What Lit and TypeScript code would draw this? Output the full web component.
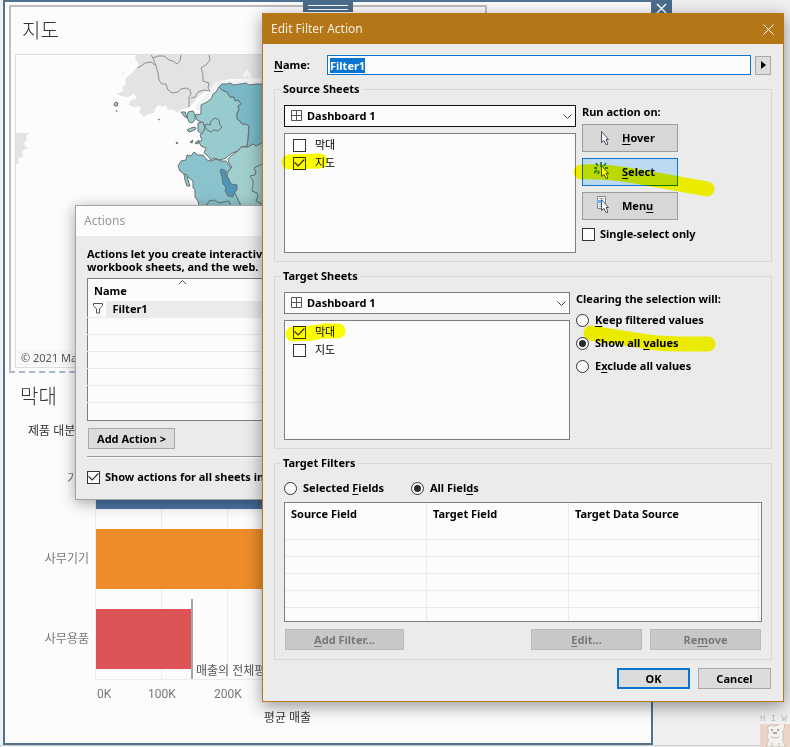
import { LitElement, html, css, svg } from "lit";
import { customElement, property } from "lit/decorators.js";

const check = css`
  input[type="checkbox"],
  input[type="radio"] {
    appearance: none;
    flex: none;
    width: 13px;
    height: 13px;
    margin: 0;
    border: 1px solid #333;
    background: #fcfcfc;
    display: grid;
    place-items: center;
  }
  input[type="radio"] {
    border-radius: 50%;
  }
  input[type="radio"]:checked::before {
    content: "";
    width: 7px;
    height: 7px;
    border-radius: 50%;
    background: #2b2b2b;
  }
  input[type="checkbox"]:checked::before {
    content: "";
    width: 11px;
    height: 11px;
    background: #333;
    clip-path: polygon(0 48%, 9% 40%, 38% 68%, 90% 14%, 98% 22%, 38% 84%);
  }
`;

const controls = css`
  * {
    box-sizing: border-box;
  }
  button,
  input,
  select {
    font: inherit;
    color: inherit;
    border-radius: 0;
    margin: 0;
  }
  button {
    border: 1px solid #a9a9a9;
    background: #dcdcdc;
    padding: 0;
    height: 21px;
    line-height: 16px;
  }
  u {
    text-underline-offset: 2px;
    text-decoration-skip-ink: none;
  }
`;

@customElement("map-view")
class MapView extends LitElement {
  static styles = css`
    :host {
      display: block;
      position: relative;
      overflow: hidden;
      border: 1px solid #dedede;
    }
    .land {
      display: block;
      width: 100%;
      height: 312px;
    }
    .credit {
      position: absolute;
      left: 2px;
      bottom: 2px;
      padding: 0 3px;
      background: #f6f6f6;
      color: #555;
      font-size: 11px;
      line-height: 15px;
    }
  `;
  render() {
    return html`
      <svg class="land" viewBox="16 55 470 312" preserveAspectRatio="xMinYMin slice" aria-hidden="true">
        <path fill="#e3e3e3" d="M136 55 135 60 138 62 139 66 135 69 131 74 127 77 125 80 126 84 122 88 124 90 117 94 121 96 128 97 134 94 137 98 130 101 129 105 134 107 139 106 141 109 139 112 144 117 148 114 154 113 155 109 158 105 163 107 166 105 168 110 173 109 177 113 182 109 188 108 194 102 199 96 203 93 209 90 214 85 221 81 230 79 486 79V55zM16 133 30 133 26 136 27 140 24 142 25 146 28 148 22 151 23 157 18 158 19 163 16 164zM122 72 124 73 123 74zM41 113 43 113 42 114zM88 114 89 115 88 115z" />
        <path fill="#f2f2f2" d="M196 109 196 105 201 100 208 93 212 88 214 83 222 81 236 80 250 78 262 78V85L221 85 212 93 204 104 200 112z" />
        <path fill="#f4f4f4" d="M242 71 245 73 247 68 249 72 251 74 250 78 247 76 243 78 244 74z" />
        <g fill="none" stroke="#8f8f8f" stroke-width="1">
          <path d="M151 55 153 58 156 66 158 73 159 80 162 84 166 84 168 90 172 93 178 92 181 89 186 88 190 90 191 94 189 97 189 107" />
          <path d="M137 68 141 66 145 63 151 62 155 65M153 58 158 56 164 56 169 60 173 61 177 64 180 61 181 55M209 55 210 60 206 65 201 68 203 74 203 81 209 83 208 88 210 91 204 90 198 92 195 97 191 98" />
        </g>
        <g stroke="#667174" stroke-width="1" stroke-linejoin="round">
          <path fill="#98cbce" d="M219 87 216 92 213 94 211 99 207 102 201 105 201 114 195 115 197 120 203 123 205 127 203 132 200 135 202 140 199 142 201 146 206 148 204 153 207 155 211 160 214 158 220 160 226 158 232 153 238 151 241 147 247 146 248 140 249 126 246 124 242 124 240 121 237 119 237 113 239 110 238 106 241 104 238 100 235 101 234 97 230 97 227 92 222 90z" />
          <path fill="#7bb8c7" d="M219 87 222 84 227 84 230 83 234 85 240 84 246 83 249 85 256 84 262 84H300V170L262 144 256 146 253 144 248 147 247 146 248 140 249 126 246 124 242 124 240 121 237 119 237 113 239 110 238 106 241 104 238 100 235 101 234 97 230 97 227 92 222 90z" />
          <path fill="#8bc3cd" d="M181 161 186 160 187 155 191 156 194 152 198 155 203 155 207 160 211 161 216 159 221 161 226 161 229 165 231 168 228 172 227 178 232 185 236 195 241 206H199L198 201 195 197 195 190 193 188 193 181 188 177 184 174 180 171 178 166z" />
          <path fill="#a0cfcd" d="M232 167 229 163 228 159 232 155 238 151 241 147 248 147 253 144 256 146 262 143H310V206H241L235 193 228 180 227 173z" />
          <path fill="#98cbce" d="M206 124 210 125 211 121 215 118 219 120 220 125 222 127 218 131 214 130 211 132 207 130 205 127zM188 112 193 111 195 115 195 120 192 123 189 122 187 117zM198 123 203 122 205 128 202 134 198 131zM187 130 191 128 195 127 196 129 192 131 189 132zM181 112 185 112 187 118 184 116zM114 104 116 102 118 103 117 106 115 106z" />
          <path fill="none" d="M262 164 258 166 254 168 256 172 255 175 250 176 253 180 253 186 252 191 257 193 258 196 256 201 262 204M199 206 207 205 209 201 214 200 219 203 224 202 229 201 231 206" />
          <path fill="#4f97b8" d="M220 170 222 169 226 171 226 177 229 179 231 184 237 185 237 190 234 193 233 197 228 196 225 191 226 187 223 184 222 177z" />
          <path fill="#8bc3cd" d="M184 174 187 175 188 180 190 186 187 186 185 180zM116 110 117 112M158 119 160 120M176 142 178 143 177 144zM190 142 193 140 192 143zM195 143 199 140 198 144z" />
        </g>
      </svg>
      <div class="credit">© 2021 Mapbox</div>
    `;
  }
}

interface Bar {
  label: string;
  value: number;
  tone: string;
}

@customElement("bar-view")
class BarView extends LitElement {
  static styles = css`
    :host {
      display: block;
      color: #777;
      font-size: 12px;
      line-height: 16px;
    }
    .row {
      display: grid;
      grid-template-columns: 80px 1fr;
      column-gap: 6px;
      align-items: center;
      height: 80px;
    }
    .label {
      text-align: right;
    }
    .track {
      position: relative;
      display: flex;
      align-items: center;
      height: 80px;
      border-left: 1px solid #ececec;
      background: repeating-linear-gradient(90deg, transparent 0 65px, #ececec 65px 66px);
    }
    .bar {
      height: 60px;
    }
    .blue { background: #4a74a2; }
    .orange { background: #ef8c2a; }
    .red { background: #dd5356; }
    .mean {
      position: absolute;
      left: 95px;
      top: 0;
      height: 80px;
      border-left: 2px solid rgba(80, 80, 80, 0.5);
      display: flex;
      align-items: end;
      padding-left: 3px;
      white-space: nowrap;
      color: #555;
    }
    .axis {
      margin-left: 86px;
      border-top: 1px solid #ececec;
      display: flex;
      padding-top: 6px;
      font-family: Roboto, sans-serif;
    }
    .tick {
      width: 66px;
      text-align: center;
    }
    .tick:first-child {
      width: 32px;
      text-align: left;
      padding-left: 2px;
    }
    .title {
      margin: 8px 0 0 86px;
      text-align: center;
      color: #333;
    }
  `;
  bars: Bar[] = [
    { label: "가구", value: 290, tone: "blue" },
    { label: "사무기기", value: 320, tone: "orange" },
    { label: "사무용품", value: 95, tone: "red" },
  ];
  render() {
    return html`
      ${this.bars.map(
        (b) => html`<div class="row">
          <div class="label">${b.label}</div>
          <div class="track">
            <div class="bar ${b.tone}" style="width:${b.value}px"></div>
            ${b.tone === "red" ? html`<div class="mean">매출의 전체평균</div>` : ""}
          </div>
        </div>`
      )}
      <div class="axis">
        ${["0K", "100K", "200K"].map((t) => html`<div class="tick">${t}</div>`)}
      </div>
      <div class="title">평균 매출</div>
    `;
  }
}

@customElement("actions-dialog")
class ActionsDialog extends LitElement {
  static styles = [
    controls,
    check,
    css`
      :host {
        display: block;
        border: 1px solid #a3a3a3;
        background: #ebebeb;
        box-shadow: 0 3px 14px rgba(0, 0, 0, 0.35);
        font-weight: 700;
      }
      .bar {
        height: 30px;
        line-height: 30px;
        padding-left: 8px;
        background: #fcfcfc;
        color: #999;
        font-weight: 400;
        font-size: 12px;
      }
      .body {
        padding: 11px 11px 14px;
      }
      .intro {
        margin: 0 0 5px;
        line-height: 13px;
        white-space: nowrap;
      }
      table {
        width: 100%;
        border: 1px solid #7b7d88;
        border-collapse: collapse;
        background: #fcfcfc;
        text-align: left;
      }
      th {
        height: 22px;
        padding: 2px 6px 0;
        position: relative;
      }
      th svg {
        position: absolute;
        left: 90px;
        top: 0;
      }
      td {
        height: 17px;
        padding: 0 7px;
        border-bottom: 1px solid #e9e9e9;
        line-height: 16px;
      }
      tr:last-child td {
        height: 18px;
        border-bottom: 0;
      }
      .icon {
        width: 18px;
        padding: 0 0 0 5px;
      }
      .icon svg {
        display: block;
      }
      .picked {
        background: #ebebeb;
      }
      .add {
        margin: 7px 0 0 1px;
        width: 87px;
      }
      .rule {
        margin: 7px 0 11px;
        border: 0;
        border-top: 1px solid #999;
        border-bottom: 1px solid #fcfcfc;
      }
      label {
        display: flex;
        align-items: center;
        gap: 5px;
        line-height: 16px;
      }
    `,
  ];
  render() {
    return html`
      <div class="bar">Actions</div>
      <div class="body">
        <p class="intro">Actions let you create interactive<br />workbook sheets, and the web.</p>
        <table>
          <thead>
            <tr>
              <th colspan="2">Name
                <svg width="9" height="6" fill="none" stroke="#555"><path d="M1 5 4.500 1.500 8 5" /></svg>
              </th>
            </tr>
          </thead>
          <tbody>
            <tr>
              <td class="icon">
                <svg width="11" height="11" fill="none" stroke="#555"><path d="M.5.5h9v2L6.500 6v4h-3V6L.5 2.500z" /></svg>
              </td>
              <td class="picked">Filter1</td>
            </tr>
            ${[1, 2, 3, 4, 5, 6].map(() => html`<tr><td colspan="2"></td></tr>`)}
          </tbody>
        </table>
        <button class="add">Add Action &gt;</button>
        <hr class="rule" />
        <label><input type="checkbox" checked />Show actions for all sheets in</label>
      </div>
    `;
  }
}

@customElement("sheet-picker")
class SheetPicker extends LitElement {
  @property() ticked = "";
  @property({ type: Boolean }) active = false;
  static styles = [
    controls,
    check,
    css`
      :host {
        display: block;
      }
      .drop {
        position: relative;
      }
      select {
        appearance: none;
        display: block;
        width: 100%;
        height: 22px;
        padding: 0 22px;
        border: 1px solid #7a7a7a;
        background: #fcfcfc;
      }
      .active {
        border-color: #111;
      }
      .grid {
        position: absolute;
        left: 7px;
        top: 5px;
      }
      .chevron {
        position: absolute;
        right: 4px;
        top: 9px;
      }
      .list {
        margin-top: 6px;
        height: 120px;
        padding: 2px 8px;
        border: 1px solid #7b7d88;
        background: #fcfcfc;
      }
      label {
        display: flex;
        align-items: center;
        gap: 9px;
        height: 18px;
        font-weight: 400;
        color: #000;
      }
      label input {
        margin-bottom: 4px;
      }
    `,
  ];
  render() {
    return html`
      <div class="drop">
        <select class=${this.active ? "active" : ""} aria-label="Sheet">
          <option>Dashboard 1</option>
        </select>
        <svg class="grid" width="11" height="11" fill="none" stroke="#555"><path d="M.5.5h10v10H.5zM5.500.5v10M.5 5.500h10" /></svg>
        <svg class="chevron" width="9" height="6" fill="none" stroke="#444"><path d="M.5.5l4 4 4-4" /></svg>
      </div>
      <div class="list">
        ${["막대", "지도"].map(
          (n) => html`<label><input type="checkbox" ?checked=${n === this.ticked} />${n}</label>`
        )}
      </div>
    `;
  }
}

const arrow = svg`<path d="M7.500 3.500v11l2.500-2 2 4h1.500v-2l-1.500-3h2.500z" fill="#fcfcfc" stroke="#4b5360" />`;

@customElement("edit-dialog")
class EditDialog extends LitElement {
  static styles = [
    controls,
    check,
    css`
      :host {
        display: block;
        border: 1px solid #b67a1b;
        background: #ebebeb;
        box-shadow: 0 4px 16px rgba(0, 0, 0, 0.42);
        font-weight: 700;
        line-height: 16px;
      }
      .bar {
        display: flex;
        justify-content: space-between;
        align-items: center;
        height: 30px;
        padding: 0 8px;
        background: #b47617;
        color: #f5eee2;
        font-weight: 400;
        font-size: 12px;
      }
      .close {
        border: 0;
        background: none;
        width: 13px;
        height: 13px;
      }
      .close svg {
        display: block;
      }
      .body {
        padding: 11px 11px 12px;
      }
      .name {
        display: flex;
        align-items: center;
        gap: 4px;
        margin-right: 1px;
      }
      .name label {
        width: 49px;
      }
      .field {
        flex: 1;
        height: 20px;
        border: 1px solid #0b74cf;
        background: #fcfcfc;
        padding: 0 2px;
        outline: 0;
      }
      .field::selection {
        background: #0a74d1;
        color: #fff;
      }
      .more {
        width: 16px;
        height: 19px;
        display: grid;
        place-items: center;
      }
      fieldset {
        margin: 6px 0 0;
        min-width: 0;
        border: 1px solid #d7d7d7;
        padding: 8px 9px;
      }
      legend {
        padding: 0 2px;
        margin-left: -3px;
      }
      .cols {
        display: grid;
        grid-template-columns: 1fr 180px;
        column-gap: 6px;
      }
      .target .cols {
        grid-template-columns: 1fr 186px;
      }
      .side {
        display: flex;
        flex-direction: column;
        align-items: start;
        gap: 6px;
      }
      .side .head {
        margin: -1px 0 -2px;
      }
      .target .side {
        gap: 7px;
      }
      .mode {
        width: 96px;
        height: 28px;
        display: flex;
        align-items: center;
        gap: 8px;
        padding-left: 11px;
        background: #d7d7d7;
        border-color: #9c9c9c;
      }
      .on {
        background: #bbd9f2;
        border-color: #0b74cf;
      }
      .choice {
        display: flex;
        align-items: center;
        gap: 6px;
      }
      .single {
        gap: 5px;
      }
      .radios {
        display: flex;
        gap: 27px;
        margin-bottom: 6px;
      }
      table {
        width: 100%;
        table-layout: fixed;
        border: 1px solid #7b7d88;
        border-spacing: 0;
        background: #fcfcfc;
        text-align: left;
      }
      th {
        height: 20px;
        padding: 2px 6px 0;
        border-right: 1px solid #e9e9e9;
      }
      td {
        height: 17px;
        padding: 0;
        border-right: 1px solid #e9e9e9;
        border-bottom: 1px solid #e9e9e9;
      }
      th:last-child,
      td:last-child {
        border-right: 0;
      }
      tr:last-child td {
        height: 13px;
        border-bottom: 0;
      }
      .pair {
        width: 142px;
      }
      .edge {
        width: 2px;
        padding: 0;
      }
      .tools {
        display: flex;
        gap: 8px;
        margin: 7px 1px 0;
      }
      .tools button {
        width: 111px;
        background: #c8c8c8;
        border-color: #bbb;
        color: #777;
      }
      .tools .wide {
        width: 119px;
        margin-right: auto;
      }
      .filters {
        padding-top: 9px;
        padding-bottom: 9px;
      }
      .footer {
        display: flex;
        justify-content: end;
        gap: 8px;
        margin: 8px 1px 0 0;
      }
      .footer button {
        width: 73px;
      }
      .footer .ok {
        border: 2px solid #0b74cf;
      }
      .marker {
        position: absolute;
        left: 0;
        top: 0;
        width: 100%;
        height: 100%;
        pointer-events: none;
        mix-blend-mode: multiply;
      }
    `,
  ];
  render() {
    return html`
      <div class="bar">
        Edit Filter Action
        <button class="close" aria-label="Close">
          <svg width="13" height="13" stroke="#fff"><path d="M1.500 1.500l10 10M11.500 1.500l-10 10" /></svg>
        </button>
      </div>
      <div class="body">
        <div class="name">
          <label for="n"><u>N</u>ame:</label>
          <input class="field" id="n" value="Filter1" />
          <button class="more" aria-label="Insert">
            <svg width="5" height="8"><path d="M0 0l5 4-5 4z" /></svg>
          </button>
        </div>
        <fieldset>
          <legend>Source Sheets</legend>
          <div class="cols">
            <sheet-picker active ticked="지도"></sheet-picker>
            <div class="side">
              <div class="head">Run action on:</div>
              <button class="mode">
                <svg width="20" height="20">${arrow}</svg><span><u>H</u>over</span>
              </button>
              <button class="mode on">
                <svg width="20" height="20">
                  <path fill="none" stroke="#2f8a5f" stroke-width="2" d="M7 5V0M10 4l2-3M4 4L2 1M3 6H-1M3 8L0 11M5 9l-1 3M11 6h3" />
                  ${arrow}
                </svg>
                <span><u>S</u>elect</span>
              </button>
              <button class="mode">
                <svg width="20" height="20">
                  <path fill="#fcfcfc" stroke="#7d858e" d="M3.500.5h8v12h-8z" />
                  <path fill="#66b3ee" d="M3 4h5v3H3z" />
                  <path stroke="#99aaaa" d="M5 2.500h5M5 8.500h2M5 10.500h2" />
                  ${arrow}
                </svg>
                <span>Men<u>u</u></span>
              </button>
              <label class="choice single"><input type="checkbox" />Single-select only</label>
            </div>
          </div>
        </fieldset>
        <fieldset class="target">
          <legend>Target Sheets</legend>
          <div class="cols">
            <sheet-picker ticked="막대"></sheet-picker>
            <div class="side">
              <div class="head">Clearing the selection will:</div>
              <label class="choice"><input type="radio" name="c" /><span><u>K</u>eep filtered values</span></label>
              <label class="choice"><input type="radio" name="c" checked /><span>Show all <u>v</u>alues</span></label>
              <label class="choice"><input type="radio" name="c" /><span>E<u>x</u>clude all values</span></label>
            </div>
          </div>
        </fieldset>
        <fieldset class="filters">
          <legend>Target Filters</legend>
          <div class="radios">
            <label class="choice"><input type="radio" name="f" /><span>Selected <u>F</u>ields</span></label>
            <label class="choice"><input type="radio" name="f" checked /><span>All Fiel<u>d</u>s</span></label>
          </div>
          <table>
            <thead>
              <tr>
                <th class="pair">Source Field</th>
                <th class="pair">Target Field</th>
                <th>Target Data Source</th>
                <th class="edge"></th>
              </tr>
            </thead>
            <tbody>
              ${[1, 2, 3, 4, 5, 6].map(() => html`<tr><td></td><td></td><td></td><td></td></tr>`)}
            </tbody>
          </table>
          <div class="tools">
            <button class="wide" disabled><u>A</u>dd Filter...</button>
            <button disabled><u>E</u>dit...</button>
            <button disabled>Re<u>m</u>ove</button>
          </div>
        </fieldset>
        <div class="footer">
          <button class="ok">OK</button>
          <button>Cancel</button>
        </div>
      </div>
      <svg class="marker" fill="none" stroke="#ff0" stroke-width="15" stroke-linecap="round" stroke-linejoin="round" aria-hidden="true">
        <path d="M26 148L57 147" />
        <path d="M30 320L50 319 60 317 75 317" />
        <path d="M318 158C350 156 380 164 444 175" />
        <path d="M328 319C350 323 370 325 385 328 410 331 430 330 445 330" />
      </svg>
    `;
  }
  firstUpdated() {
    const field = this.renderRoot.querySelector("input") as HTMLInputElement;
    field.focus();
    field.select();
  }
}

@customElement("app-root")
class AppRoot extends LitElement {
  static styles = css`
    * {
      box-sizing: border-box;
    }
    :host {
      display: block;
      position: relative;
      min-height: 100vh;
      overflow: hidden;
      background: #f0f0f0;
      color: #000;
      font-family: "Noto Sans", "Noto Sans CJK KR", sans-serif;
      font-size: 11px;
    }
    .dash {
      margin: 0 137px 0 3px;
      border: 2px solid #4f7192;
      background: #fcfcfc;
      padding: 3px 0 17px 4px;
    }
    .sheet {
      width: 478px;
      border: 2px solid #bdbdbd;
      border-bottom: 2px dashed #a9b6cc;
      padding: 9px 4px 3px;
    }
    h2 {
      margin: 0 0 8px 7px;
      font-weight: 300;
      font-size: 20px;
      line-height: 30px;
      color: #333;
    }
    .second {
      width: 471px;
      padding-top: 9px;
    }
    .second h2 {
      margin: 0 0 11px 11px;
    }
    .dim {
      margin-left: 19px;
      font-size: 12px;
      line-height: 16px;
      color: #333;
    }
    .grip {
      position: absolute;
      left: 303px;
      top: 0;
      width: 50px;
      height: 12px;
      background: #4b6d8d;
      display: grid;
      align-content: center;
      gap: 3px;
      padding: 3px 5px 0;
    }
    .line {
      height: 1px;
      background: #fff;
    }
    .shut {
      position: absolute;
      right: 118px;
      top: 0;
      width: 20px;
      height: 16px;
      border: 0;
      padding: 3px 4px 3px 2px;
      background: #4b6d8d;
    }
    .shut svg {
      display: block;
      margin: auto;
    }
    .actions {
      position: absolute;
      left: 75px;
      top: 205px;
      width: 500px;
    }
    .edit {
      position: absolute;
      left: 262px;
      right: 6px;
      top: 13px;
    }
    .mascot {
      position: absolute;
      right: 0;
      bottom: 0;
      width: 30px;
      color: #bbb;
      font: 9px/9px "Liberation Mono", monospace;
      white-space: pre;
      overflow: hidden;
    }
    .mascot svg {
      display: block;
    }
    .ruler {
      position: absolute;
      left: 0;
      bottom: 0;
      width: 100%;
      height: 2px;
      border-top: 1px solid #ccc;
    }
  `;
  render() {
    return html`
      <main class="dash">
        <section class="sheet">
          <h2>지도</h2>
          <map-view></map-view>
        </section>
        <section class="second">
          <h2>막대</h2>
          <div class="dim">제품 대분류</div>
          <bar-view></bar-view>
        </section>
      </main>
      <div class="ruler"></div>
      <div class="grip"><div class="line"></div><div class="line"></div></div>
      <button class="shut" aria-label="Remove sheet">
        <svg width="11" height="11" stroke="#fff" stroke-width="1.500"><path d="M1 1l9 9M10 1l-9 9" /></svg>
      </button>
      <div class="mascot">H I W<svg width="30" height="23">
          <path fill="#ecd5c6" d="M0 0h30v23H0z" />
          <path fill="#f3f1ee" stroke="#cdc3ba" d="M6.500 23l2-7-2-4 2-3-1-6 4-2 3 1 4-1 2-2 4 1v4l-2 4 1 4-1 4 3 7z" />
          <path fill="#a9a9a9" d="M11 5h2v2h-2zM17 5h2v2h-2zM13 8h4v2h-4z" />
          <path fill="none" stroke="#c4bcb6" d="M11 13q4 2 8 0M12 23v-4M19 23v-4" />
        </svg></div>
      <actions-dialog class="actions"></actions-dialog>
      <edit-dialog class="edit"></edit-dialog>
    `;
  }
}
